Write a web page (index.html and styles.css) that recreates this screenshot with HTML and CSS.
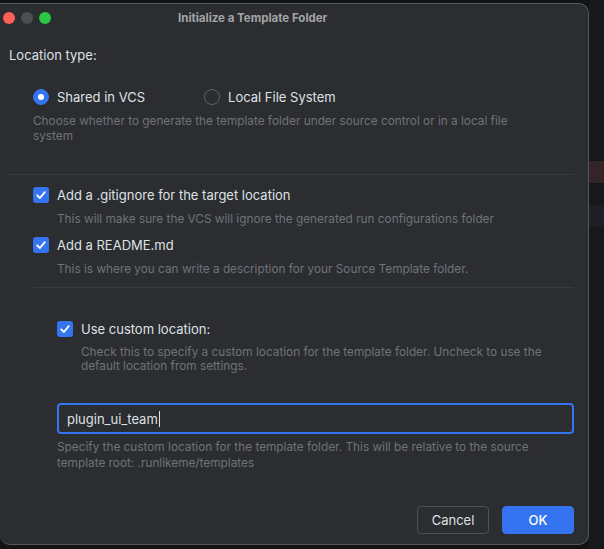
FILE: index.html
```html
<!DOCTYPE html>
<html>
<head>
<meta charset="utf-8">
<link rel="stylesheet" href="styles.css">
</head>
<body>
<div class="screen">
  <div class="window">
    <div class="titlebar">
      <div class="lights">
        <span class="light red"></span>
        <span class="light gray"></span>
        <span class="light green"></span>
      </div>
      <div class="title">Initialize a Template Folder</div>
    </div>
    <div class="content">
      <div class="label">Location type:</div>
      <div class="radios">
        <div class="radio-row">
          <label class="radio"><span class="dot on"></span>Shared in VCS</label>
          <label class="radio"><span class="dot"></span>Local File System</label>
        </div>
        <div class="desc wide">Choose whether to generate the template folder under source control or in a local file system</div>
      </div>
      <div class="sep"></div>
      <div class="checks">
        <div class="check-item first">
          <label class="check"><span class="box"><svg viewBox="0 0 16 16" width="16" height="16"><path d="M4.2 8.3 L6.9 11 L11.8 5.2" fill="none" stroke="#fff" stroke-width="1.8" stroke-linecap="round" stroke-linejoin="round"/></svg></span>Add a .gitignore for the target location</label>
          <div class="desc">This will make sure the VCS will ignore the generated run configurations folder</div>
        </div>
        <div class="check-item">
          <label class="check"><span class="box"><svg viewBox="0 0 16 16" width="16" height="16"><path d="M4.2 8.3 L6.9 11 L11.8 5.2" fill="none" stroke="#fff" stroke-width="1.8" stroke-linecap="round" stroke-linejoin="round"/></svg></span>Add a README.md</label>
          <div class="desc">This is where you can write a description for your Source Template folder.</div>
        </div>
        <div class="sep inner"></div>
        <div class="custom">
          <div class="check-item">
            <label class="check"><span class="box"><svg viewBox="0 0 16 16" width="16" height="16"><path d="M4.2 8.3 L6.9 11 L11.8 5.2" fill="none" stroke="#fff" stroke-width="1.8" stroke-linecap="round" stroke-linejoin="round"/></svg></span>Use custom location:</label>
            <div class="desc">Check this to specify a custom location for the template folder. Uncheck to use the default location from settings.</div>
          </div>
          <div class="field">
            <div class="input">plugin_ui_team<span class="caret"></span></div>
            <div class="desc field-desc">Specify the custom location for the template folder. This will be relative to the source template root: .runlikeme/templates</div>
          </div>
        </div>
      </div>
      <div class="buttons">
        <button class="btn cancel">Cancel</button>
        <button class="btn ok">OK</button>
      </div>
    </div>
  </div>
  <div class="side">
    <div class="stripe s1"></div>
    <div class="stripe s2"></div>
    <div class="stripe s3"></div>
  </div>
</div>
</body>
</html>
```

FILE: styles.css
```css
* { box-sizing: border-box; }
html, body {
  margin: 0;
  padding: 0;
  background: #121314;
  width: 604px;
  height: 549px;
  overflow: hidden;
  font-family: Inter, "Noto Sans", sans-serif;
}
.screen {
  display: flex;
  height: 549px;
}
.window {
  margin-top: 3px;
  width: 589px;
  height: 542px;
  background: #2b2d30;
  border: 1px solid #55575c;
  border-left: none;
  border-radius: 0 10px 10px 10px;
  display: flex;
  flex-direction: column;
}
.titlebar {
  height: 27px;
  display: flex;
  align-items: center;
  padding-left: 3px;
}
.lights {
  display: flex;
  gap: 6px;
  margin-top: 1px;
}
.light {
  width: 12px;
  height: 12px;
  border-radius: 50%;
}
.light.red { background: #fe5f57; }
.light.gray { background: #4d4e51; }
.light.green { background: #28c840; }
.title {
  color: #a3a4a6;
  font-weight: 700;
  font-size: 11.5px;
  margin-left: 127px;
  margin-top: 1px;
}
.content {
  flex: 1;
  display: flex;
  flex-direction: column;
  padding: 16px 14px 10px 9px;
  color: #dfe1e5;
  font-size: 13px;
}
.label {
  line-height: 16px;
}
.radios {
  padding-left: 24px;
  margin-top: 26px;
}
.radio-row {
  display: flex;
  gap: 59px;
}
.radio {
  display: flex;
  align-items: center;
  gap: 8px;
  line-height: 16px;
}
.dot {
  width: 16px;
  height: 16px;
  border-radius: 50%;
  border: 1px solid #5e6166;
  background: #2b2d30;
  display: flex;
  align-items: center;
  justify-content: center;
}
.dot.on {
  background: #3574f0;
  border-color: #3574f0;
}
.dot.on::after {
  content: "";
  width: 6px;
  height: 6px;
  border-radius: 50%;
  background: #fff;
}
.desc {
  color: #6f737a;
  font-size: 11.8px;
  line-height: 14.5px;
  margin-top: 9px;
}
.radios .desc {
  margin-top: 9px;
}
.desc.wide {
  max-width: 480px;
}
.sep {
  height: 1px;
  background: #393b40;
  margin-top: 31px;
}
.checks {
  padding-left: 24px;
  display: flex;
  flex-direction: column;
}
.check-item {
  margin-top: 10px;
}
.check-item.first {
  margin-top: 12px;
}
.check {
  display: flex;
  align-items: center;
  gap: 8px;
  line-height: 16px;
}
.box {
  width: 16px;
  height: 16px;
  border-radius: 3px;
  background: #3574f0;
  display: flex;
}
.check-item .desc {
  padding-left: 24px;
}
.sep.inner {
  margin-top: 11px;
}
.custom {
  padding-left: 24px;
  padding-top: 23px;
}
.custom .check-item .desc {
  max-width: 490px;
  margin-top: 8px;
  line-height: 14px;
}
.field {
  margin-top: 30px;
}
.input {
  height: 31px;
  border: 2px solid #3574f0;
  border-radius: 4px;
  padding: 0 8px;
  display: flex;
  align-items: center;
  color: #dfe1e5;
  font-size: 13px;
}
.caret {
  display: inline-block;
  width: 1px;
  height: 16px;
  background: #dfe1e5;
  margin-left: 1px;
}
.field-desc {
  margin-top: 5px;
  max-width: 490px;
  line-height: 16px;
}
.buttons {
  margin-top: auto;
  display: flex;
  justify-content: flex-end;
  gap: 13px;
}
.btn {
  font-family: Inter, "Noto Sans", sans-serif;
  font-size: 13px;
  height: 28px;
  border-radius: 4px;
  padding: 0;
  text-align: center;
}
.btn.cancel {
  width: 72px;
  background: #2b2d30;
  border: 1px solid #4e5157;
  color: #dfe1e5;
}
.btn.ok {
  width: 72px;
  background: #3574f0;
  border: 1px solid #3574f0;
  color: #fff;
  font-weight: 500;
}
.side {
  flex: 1;
  display: flex;
  flex-direction: column;
  background: #17181b;
}
.stripe.s1 { height: 161px; }
.stripe.s2 { height: 22px; background: #35232a; }
.stripe.s3 { height: 22px; margin-top: 22px; background: #1e1f24; }
```
